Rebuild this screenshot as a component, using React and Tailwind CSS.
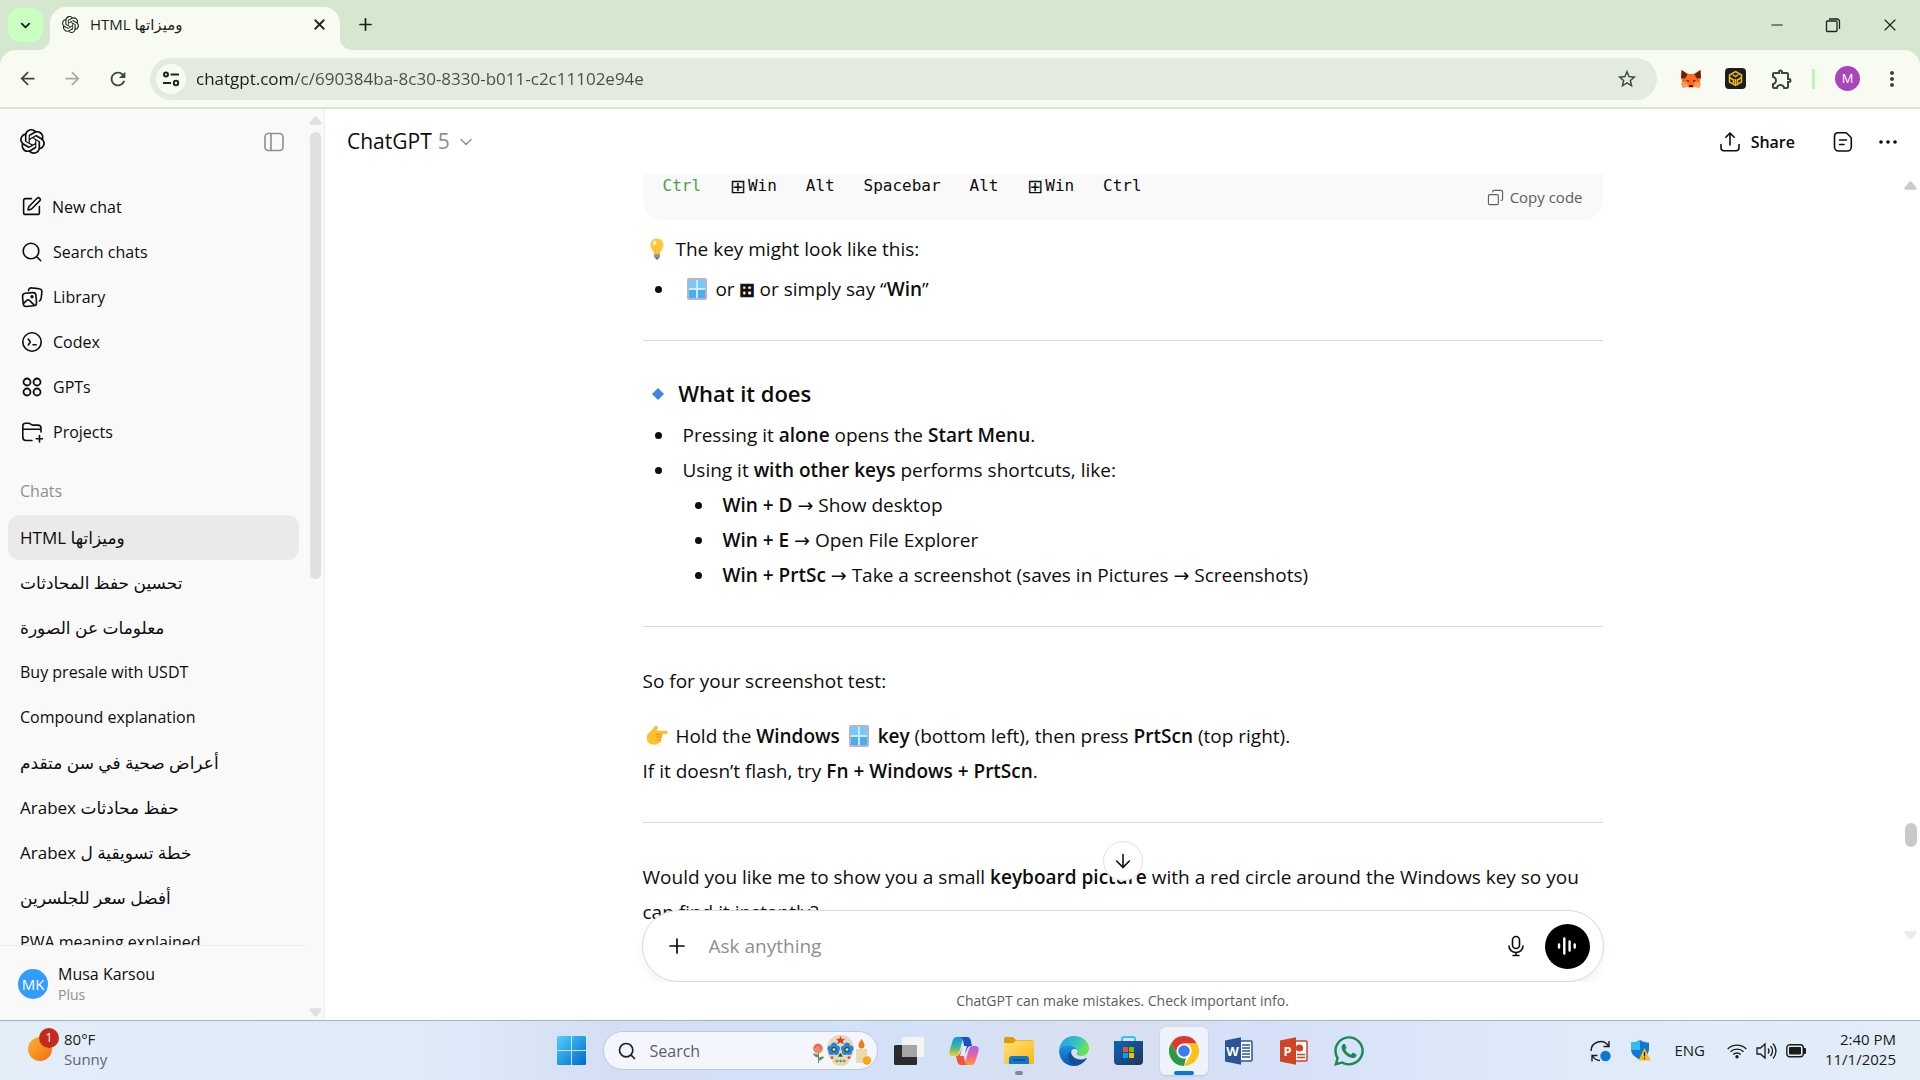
// Desktop view: browser window with a ChatGPT conversation, and the Windows taskbar below it.

import { ArrowDown, ChevronDown, Copy, Minus, Plus, Search, SquarePen, X } from 'lucide-react';
import { FaWhatsapp } from 'react-icons/fa';
import {
  MdArrowBack, MdArrowForward, MdMoreVert, MdOutlineExtension, MdRefresh, MdStarBorder,
} from 'react-icons/md';
import { SiOpenai } from 'react-icons/si';

const CHATS = [
  'HTML وميزاتها',
  'تحسين حفظ المحادثات',
  'معلومات عن الصورة',
  'Buy presale with USDT',
  'Compound explanation',
  'أعراض صحية في سن متقدم',
  'حفظ محادثات Arabex',
  'خطة تسويقية ل Arabex',
  'أفضل سعر للجلسرين',
  'PWA meaning explained',
];

// Arabic letters come out small next to Latin ones, so those titles get a larger size.
const ARABIC = /[\u0600-\u06ff]/;

const NAV = [
  { icon: NewChatIcon, label: 'New chat' },
  { icon: SearchIcon, label: 'Search chats' },
  { icon: LibraryIcon, label: 'Library' },
  { icon: CodexIcon, label: 'Codex' },
  { icon: GptsIcon, label: 'GPTs' },
  { icon: ProjectsIcon, label: 'Projects' },
];

// ─── Line icons ────────────────────────────────────────────────────────────
function Line({ size = 22, width = 1.6, children, className }) {
  return (
    <svg
      width={size}
      height={size}
      viewBox="0 0 22 22"
      fill="none"
      stroke="currentColor"
      strokeWidth={width}
      strokeLinecap="round"
      strokeLinejoin="round"
      className={className}
      aria-hidden="true"
    >
      {children}
    </svg>
  );
}

function NewChatIcon() {
  return <SquarePen size={21} strokeWidth={1.8} />;
}

function SearchIcon() {
  return <Line><circle cx="10" cy="10" r="7.8" /><path d="m15.7 15.7 4 4" /></Line>;
}

function LibraryIcon() {
  return (
    <Line>
      <rect x="1.8" y="7" width="13.4" height="13.2" rx="3" transform="rotate(-5 8 13)" />
      <path d="M7.5 4.6c.2-1.8 1.5-3 3.3-2.7l7.3.8c1.8.2 3 1.6 2.8 3.4l-.8 6.5c-.2 1-.6 1.9-1.6 2.3" />
      <path d="m2.6 17.4 3.2-3c.8-.8 1.8-.8 2.6 0l4.6 4.4" />
      <circle cx="11" cy="10.8" r=".9" fill="currentColor" />
    </Line>
  );
}

function CodexIcon() {
  return (
    <Line>
      <circle cx="11" cy="11" r="9.2" />
      <path d="m7.3 8 2 3-2 3M12 13.8h3.2" />
    </Line>
  );
}

function GptsIcon() {
  return (
    <Line width={1.8}>
      <circle cx="6" cy="6" r="3.5" />
      <circle cx="16" cy="6" r="3.5" />
      <circle cx="6" cy="16" r="3.5" />
      <circle cx="16" cy="16" r="3.5" />
    </Line>
  );
}

function ProjectsIcon() {
  return (
    <Line>
      <path d="M11 19.5H5a3.2 3.2 0 0 1-3.2-3.2V5A2.8 2.8 0 0 1 4.6 2.2h3c.9 0 1.5.4 2.1 1 .6.5 1.2.9 2.1.9h5A3.2 3.2 0 0 1 20 7.3V11M2 8.3h18M18.5 14.5v6.5M15.2 17.8h6.5" />
    </Line>
  );
}

function SidebarIcon() {
  return (
    <Line>
      <rect x="2" y="2.5" width="18" height="17" rx="3.5" />
      <path d="M8 2.5v17" />
    </Line>
  );
}

function ShareIcon() {
  return <Line><path d="M11 14V2.2M6.8 6.2 11 2l4.2 4.2M2 13.5v3.3a3 3 0 0 0 3 3h12a3 3 0 0 0 3-3v-3.3" /></Line>;
}

function DocIcon() {
  return (
    <Line>
      <path d="M6 1.8h7.3c.8 0 1.5.3 2 .9l3.1 3.1c.6.5.9 1.2.9 2V16a4 4 0 0 1-4 4H6.5a4 4 0 0 1-4-4V5.5A3.7 3.7 0 0 1 6 1.8ZM7.5 9h7M7.5 13.5h4.5" />
    </Line>
  );
}

function DotsIcon() {
  return (
    <svg width="20" height="20" viewBox="0 0 20 20" fill="currentColor" aria-hidden="true">
      <circle cx="3" cy="10" r="1.8" /><circle cx="10" cy="10" r="1.8" /><circle cx="17" cy="10" r="1.8" />
    </svg>
  );
}

function MicIcon() {
  return (
    <Line>
      <rect x="7.5" y="1.5" width="7" height="12" rx="3.5" />
      <path d="M4 11a7 6.5 0 0 0 14 0M11 17.5v3M8 20.5h6" />
    </Line>
  );
}

function TuneIcon() {
  return (
    <svg width="18" height="18" viewBox="0 0 18 18" fill="none" stroke="#1d2a1b" strokeWidth="2" aria-hidden="true">
      <circle cx="4" cy="4.5" r="2" /><path d="M8.5 4.5H17M1 13h8" /><circle cx="14" cy="13" r="2.2" />
    </svg>
  );
}

function Triangle({ className }) {
  return (
    <svg width="13" height="9" viewBox="0 0 13 9" fill="currentColor" className={className} aria-hidden="true">
      <path d="M5.3 1a1.5 1.5 0 0 1 2.4 0l4.6 5.6c.7 1 .2 2.2-1 2.2H1.7C.5 8.8 0 7.6.7 6.6Z" />
    </svg>
  );
}

// ─── Browser chrome ────────────────────────────────────────────────────────
function TabStrip() {
  return (
    <div className="h-[50px] shrink-0 flex items-start bg-[#d5e7ce] text-[#1c241a]">
      <button type="button" aria-label="Search tabs" className="ml-2 mt-2 w-[35px] h-[34px] rounded-xl bg-[#c9ffc0] grid place-items-center">
        <ChevronDown size={15} strokeWidth={3} />
      </button>
      <div className="relative ml-[7px] mt-[7px] w-[290px] h-[43px] rounded-t-2xl bg-[#f8fbf1] flex items-center px-3">
        <span className="absolute -left-3 bottom-0 size-3 bg-[radial-gradient(circle_at_0_0,transparent_12px,#f8fbf1_12px)]" />
        <span className="absolute -right-3 bottom-0 size-3 bg-[radial-gradient(circle_at_100%_0,transparent_12px,#f8fbf1_12px)]" />
        <SiOpenai size={17} className="-mt-2" />
        <span className="-mt-2 ml-[11px] flex-1 text-[15px]">HTML وميزاتها</span>
        <button type="button" aria-label="Close tab" className="-mt-2"><X size={17} strokeWidth={2.5} /></button>
      </div>
      <button type="button" aria-label="New tab" className="ml-4 mt-[15px]"><Plus size={19} strokeWidth={2.2} /></button>
      <div className="ml-auto mt-[15px] mr-5 flex items-center gap-[38px]">
        <button type="button" aria-label="Minimize"><Minus size={18} strokeWidth={1.4} /></button>
        <button type="button" aria-label="Restore">
          <svg width="18" height="18" viewBox="0 0 18 18" fill="none" stroke="currentColor" strokeWidth="1.3">
            <rect x="2.5" y="5" width="10.5" height="10.5" rx="1" />
            <path d="M5 3h8a2.5 2.5 0 0 1 2.5 2.5V13" />
          </svg>
        </button>
        <button type="button" aria-label="Close"><X size={20} strokeWidth={1.4} /></button>
      </div>
    </div>
  );
}

function MetaMaskIcon() {
  return (
    <svg width="20" height="18" viewBox="0 0 20 18" aria-hidden="true">
      <path d="m.6 0 7 4h4.8l7-4L20 8l-1.2 3 .8 3.5-1.5 3.3-4.2-1-2 .8H8.1l-2-.8-4.2 1L.4 14.5 1.2 11 0 8Z" fill="#ff6a1c" />
      <path d="m.6 0 6 4.5L4 8.5 0 8Zm18.8 0-6 4.5 2.6 4 4-.5Z" fill="#6b1f10" />
      <path d="M1.2 12h4.5l1.6 4.8-5.2 1L.4 14.5Zm17.6 0h-4.5l-1.6 4.8 5.2 1 1.7-3.3Z" fill="#ff9a5b" />
      <path d="m5 10 3 .5-.5 1.6Zm10 0-3 .5.5 1.6ZM8.5 15h3l.5 2H8Z" fill="#2c1a15" />
    </svg>
  );
}

function BinanceIcon() {
  return (
    <svg width="21" height="21" viewBox="0 0 21 21" aria-hidden="true">
      <rect width="21" height="21" rx="4" fill="#1c1d24" />
      <g fill="none" stroke="#f2bb13" strokeWidth="1.5">
        <path d="M10.5 3.5 16.5 7v7l-6 3.500-6-3.500V7Z" />
        <path d="M4.5 9.5 8.5 12v3.500M16.500 9.500 12.500 12v3.500M7.500 6.500l3 2 3-2M10.500 11v6" />
      </g>
    </svg>
  );
}

function Toolbar() {
  return (
    <div className="bg-[#d5e7ce] shrink-0">
      <div className="h-[59px] rounded-t-2xl bg-[#f8fbf1] border-b-2 border-[#dbe5d6] flex items-center text-[#3a4a37]">
        <button type="button" aria-label="Back" className="ml-[17px]"><MdArrowBack size={21} /></button>
        <button type="button" aria-label="Forward" className="ml-6 text-[#a5aca1]"><MdArrowForward size={21} /></button>
        <button type="button" aria-label="Reload" className="ml-6"><MdRefresh size={22} /></button>
        <div className="ml-[21px] h-[42px] flex-1 rounded-full bg-[#e3ebdf] flex items-center pl-1.5 pr-[19px]">
          <button type="button" aria-label="Site information" className="w-[30px] h-[30px] rounded-full bg-[#f8fbf1] grid place-items-center">
            <TuneIcon />
          </button>
          <input
            aria-label="Address"
            defaultValue="chatgpt.com/c/690384ba-8c30-8330-b011-c2c11102e94e"
            className="ml-2.5 flex-1 text-[17px] outline-none bg-clip-text text-transparent bg-[linear-gradient(90deg,#1a1c19_97px,#454d43_97px)]"
          />
          <button type="button" aria-label="Bookmark"><MdStarBorder size={22} /></button>
        </div>
        <div className="ml-6 mr-4 flex items-center">
          <MetaMaskIcon />
          <span className="ml-6"><BinanceIcon /></span>
          <MdOutlineExtension size={24} className="ml-6" />
          <span className="ml-[18px] w-[3px] h-5 bg-[#bdf3b5]" />
          <span className="ml-5 size-[25px] rounded-full bg-[#a845bb] text-white text-[13px] grid place-items-center">M</span>
          <button type="button" aria-label="Menu" className="ml-5"><MdMoreVert size={24} /></button>
        </div>
      </div>
    </div>
  );
}

// ─── Sidebar ───────────────────────────────────────────────────────────────
function Sidebar() {
  return (
    <aside className="w-[325px] shrink-0 border-r border-[#ededed] bg-[#f9f9f9] flex">
      <div className="flex-1 min-w-0 flex flex-col">
        <div className="h-[65px] shrink-0 flex items-center justify-between pl-5 pr-6">
          <SiOpenai size={25} />
          <button type="button" aria-label="Close sidebar" className="text-[#8f8f8f]"><SidebarIcon /></button>
        </div>

        <nav className="mt-2.5 shrink-0">
          {NAV.map(({ icon: Icon, label }) => (
            <a key={label} href="#" className="h-[45px] pl-[21px] flex items-center gap-2.5">
              <Icon />
              {label}
            </a>
          ))}
        </nav>

        <h2 className="mt-[17px] mb-1 h-10 shrink-0 pl-5 leading-10 text-[#8f8f8f]">Chats</h2>
        <div className="flex-1 min-h-0 overflow-hidden">
          {CHATS.map((title, i) => (
            <a
              key={title}
              href="#"
              dir="auto"
              className={`block h-[45px] ml-2 mr-[10px] px-3 text-left leading-[45px] rounded-xl whitespace-nowrap ${ARABIC.test(title) ? 'text-[17px]' : 'text-base'} ${i === 0 ? 'bg-[#eaeaea]' : ''}`}
            >
              {title}
            </a>
          ))}
        </div>

        <div className="h-[75px] shrink-0 mr-[3px] border-t border-[#ebebeb] flex items-start">
          <span className="ml-[18px] mt-[23px] size-[30px] rounded-full bg-[#339cff] text-white text-[15px] grid place-items-center">MK</span>
          <div className="ml-2.5 mt-4">
            <p className="leading-6">Musa Karsou</p>
            <p className="text-sm leading-[18px] text-[#8f8f8f]">Plus</p>
          </div>
        </div>
      </div>
      <div className="w-[15px] shrink-0 flex flex-col items-start py-[7px] text-[#e0e0e0]">
        <Triangle />
        <span className="mt-[7px] ml-px w-[11px] h-[447px] rounded-full bg-[#e0e0e0]" />
        <Triangle className="mt-auto rotate-180 -mb-1" />
      </div>
    </aside>
  );
}

// ─── Emoji drawings that sit in the text ───────────────────────────────────
function Emoji({ children, wide }) {
  return (
    <span className={`inline-flex justify-center align-middle -mt-1 ${wide ? 'w-[30px]' : 'w-7'}`}>{children}</span>
  );
}

function WindowEmoji() {
  return (
    <Emoji>
      <svg width="20" height="22" viewBox="0 0 20 22" aria-hidden="true">
        <rect width="20" height="22" rx="2" fill="#b9b3d3" />
        <rect x="2" y="2" width="16" height="18" fill="#c9ecff" />
        <rect x="2" y="2" width="7" height="8" fill="#74cbfb" />
        <rect x="11" y="2" width="7" height="8" fill="#74cbfb" />
        <rect x="2" y="12" width="7" height="8" fill="#4bacf3" />
        <rect x="11" y="12" width="7" height="8" fill="#4bacf3" />
      </svg>
    </Emoji>
  );
}

function BulbEmoji() {
  return (
    <Emoji>
      <svg width="16" height="22" viewBox="0 0 16 22" aria-hidden="true">
        <path d="M8 .5c4 0 6.500 2.900 6.500 6.500 0 4-3 5.500-3.500 9H5C4.500 12.500 1.500 11 1.500 7 1.500 3.400 4 .5 8 .5Z" fill="#fdc83c" />
        <ellipse cx="5.5" cy="5" rx="1.8" ry="2.6" fill="#fff0a3" />
        <path d="M6.500 15V9.500L8 8l1.500 1.500V15" fill="none" stroke="#f7ae3a" strokeWidth=".8" />
        <rect x="5" y="16" width="6" height="4" rx="1" fill="#a78aae" />
        <rect x="6.5" y="19.5" width="3" height="2" rx="1" fill="#6f5a7a" />
      </svg>
    </Emoji>
  );
}

function HandEmoji() {
  return (
    <Emoji>
      <svg width="22" height="21" viewBox="0 0 22 21" aria-hidden="true">
        <path d="M10.5.8c1.5.4 1.8 2 1 3.3l-1 1.6h9.300c2.500 0 2.500 3.400 0 3.400H16c1 1 .8 2.500-.4 3 .8 1.200.4 2.500-.8 2.900.5 1.300-.1 2.500-1.500 2.800-1.500 1.700-4.300 2.200-7 1.700C2.800 18.900.8 16.500.8 13c0-3.800 2-5 4.300-6.900C7 4.500 8.200.3 10.500.8Z" fill="#ffc02e" />
        <path d="M10 9.300h6M10.500 12.200h5M10.500 15.100h4" stroke="#ee8a24" fill="none" />
      </svg>
    </Emoji>
  );
}

// ─── Conversation ──────────────────────────────────────────────────────────
function WinKey() {
  return <><span className="inline-block w-[18px] align-bottom text-[19px] leading-[22px] font-['DejaVu_Sans']">⊞</span>Win</>;
}

function Thread() {
  const rule = 'mt-[33px] mb-[37px] border-[#d9d9d9]';
  return (
    <article className="w-full max-w-[960px] mx-auto text-[19px] leading-[35px]">
      <div className="h-[46px] rounded-b-[20px] bg-[#f9f9f9] flex justify-between pl-5 pr-5">
        <pre className="pt-px font-['DejaVu_Sans_Mono',monospace] text-base leading-[22px]">
          <span className="text-[#4b9f4b]">Ctrl</span>{'   '}<WinKey />{'   Alt   Spacebar   Alt   '}<WinKey />{'   Ctrl'}
        </pre>
        <button type="button" className="flex items-center gap-1.5 text-[15px] text-[#5d5d5d]">
          <Copy size={17} strokeWidth={1.6} className="-scale-x-100" />
          Copy code
        </button>
      </div>

      <p className="mt-3"><BulbEmoji /> The key might look like this:</p>
      <ul className="mt-[5px] pl-8 list-disc">
        <li className="pl-2">
          <WindowEmoji /> or <strong className="font-bold text-lg leading-none font-['DejaVu_Sans'] [-webkit-text-stroke:1px]">⊞</strong> or simply say “<B>Win</B>”
        </li>
      </ul>

      <hr className={rule} />

      <h3 className="text-[22px] leading-[30px] font-semibold">
        <Emoji wide>
          <svg width="12" height="12" viewBox="0 0 12 12" aria-hidden="true"><path d="m6 0 6 6-6 6-6-6Z" fill="#3d87e0" /></svg>
        </Emoji>{' '}
        What it does
      </h3>
      <ul className="mt-2.5 pl-8 list-disc">
        <li className="pl-2">Pressing it <B>alone</B> opens the <B>Start Menu</B>.</li>
        <li className="pl-2">
          Using it <B>with other keys</B> performs shortcuts, like:
          <ul className="pl-8 list-disc">
            <li className="pl-2"><B>Win + D</B> → Show desktop</li>
            <li className="pl-2"><B>Win + E</B> → Open File Explorer</li>
            <li className="pl-2"><B>Win + PrtSc</B> → Take a screenshot (saves in Pictures → Screenshots)</li>
          </ul>
        </li>
      </ul>

      <hr className={rule} />

      <p>So for your screenshot test:</p>
      <p className="mt-5">
        <HandEmoji /> Hold the <B>Windows <WindowEmoji /> key</B> (bottom left), then press <B>PrtScn</B> (top right).
        <br />
        If it doesn’t flash, try <B>Fn + Windows + PrtScn</B>.
      </p>

      <hr className={rule} />

      <p>
        Would you like me to show you a small <B>keyboard picture</B> with a red circle around the Windows key so you
        can find it instantly?
      </p>
    </article>
  );
}

function B({ children }) {
  return <strong className="font-semibold">{children}</strong>;
}

function Composer() {
  return (
    <div className="absolute inset-x-0 bottom-0 flex flex-col items-center">
      <button type="button" aria-label="Scroll to bottom" className="size-10 mb-[29px] rounded-full border border-[#e3e3e3] bg-white grid place-items-center">
        <ArrowDown size={22} strokeWidth={1.7} />
      </button>
      <form className="w-full max-w-[962px] h-[72px] rounded-full border border-[#d9d9d9] bg-white shadow-[0_5px_10px_rgba(0,0,0,0.05)] flex items-center pl-[22px] pr-[13px]">
        <button type="button" aria-label="Add files"><Plus size={24} strokeWidth={1.7} /></button>
        <input aria-label="Message" placeholder="Ask anything" className="ml-5 flex-1 text-[19px] outline-none placeholder:text-[#8f8f8f]" />
        <button type="button" aria-label="Dictate"><MicIcon /></button>
        <button type="button" aria-label="Voice mode" className="ml-[18px] size-[45px] rounded-full bg-black text-white grid place-items-center">
          <svg width="20" height="20" viewBox="0 0 20 20" stroke="currentColor" strokeWidth="2.4" strokeLinecap="round">
            <path d="M2 8.500v3M7.300 2.500v15M12.600 5.500v9M17.700 8.500v3" />
          </svg>
        </button>
      </form>
      <p className="h-[38px] w-full bg-white text-center text-sm leading-[38px] text-[#5d5d5d]">
        ChatGPT can make mistakes. Check important info.
      </p>
    </div>
  );
}

function Main() {
  return (
    <main className="relative flex-1 min-w-0 flex flex-col bg-white">
      <header className="h-[65px] shrink-0 flex items-center pl-[22px] pr-[22px]">
        <button type="button" className="flex items-center gap-1.5 text-[21px]">
          ChatGPT <span className="text-[#8f8f8f]">5</span>
          <ChevronDown size={20} strokeWidth={1.7} className="text-[#8f8f8f]" />
        </button>
        <button type="button" className="ml-auto flex items-center gap-2.5 text-base font-semibold"><ShareIcon /> Share</button>
        <button type="button" aria-label="Notes" className="ml-[37px]"><DocIcon /></button>
        <button type="button" aria-label="More" className="ml-6"><DotsIcon /></button>
      </header>
      <div className="flex-1 min-h-0 overflow-hidden">
        <Thread />
      </div>
      <Composer />
      {/* conversation scrollbar */}
      <div className="absolute right-[3px] top-[72px] bottom-20 flex flex-col items-center text-[#c9c9c9]">
        <Triangle />
        <span className="mt-[633px] w-3 h-6 rounded-full bg-[#c9c9c9]" />
        <Triangle className="mt-auto rotate-180 text-[#ebebeb]" />
      </div>
    </main>
  );
}

// ─── Taskbar ───────────────────────────────────────────────────────────────
function StartLogo() {
  return (
    <svg width="29" height="29" viewBox="0 0 29 29">
      <defs>
        <linearGradient id="start" x1="0" y1="0" x2="1" y2="1"><stop stopColor="#4fd0ff" /><stop offset="1" stopColor="#0068cc" /></linearGradient>
      </defs>
      <path d="M1.500 0H14v14H0V1.500A1.500 1.500 0 0 1 1.500 0ZM15 0h12.500A1.500 1.500 0 0 1 29 1.500V14H15ZM0 15h14v14H1.500A1.500 1.500 0 0 1 0 27.500ZM15 15h14v12.500a1.500 1.500 0 0 1-1.500 1.500H15Z" fill="url(#start)" />
    </svg>
  );
}

function TaskViewLogo() {
  return (
    <svg width="30" height="28" viewBox="0 0 30 28">
      <rect y="8" width="23" height="20" rx="1.5" fill="#2b2b2b" />
      <rect x="8" width="22" height="20" rx="1.5" fill="#f4f4f4" />
      <path d="M8 8h15v12H8Z" fill="#a5a5a5" />
    </svg>
  );
}

function CopilotLogo() {
  return (
    <svg width="30" height="28" viewBox="0 0 30 28">
      <defs>
        <linearGradient id="cpA" x1="0" y1="0" x2="0" y2="1"><stop stopColor="#1b8ff0" /><stop offset=".5" stopColor="#35b7a0" /><stop offset="1" stopColor="#f6d21c" /></linearGradient>
        <linearGradient id="cpB" x1="0" y1="0" x2="0" y2="1"><stop stopColor="#a564f0" /><stop offset=".5" stopColor="#f2609c" /><stop offset="1" stopColor="#ff9a3c" /></linearGradient>
      </defs>
      <path d="M8 0h9c-3 1-4 5-5 9l-2 7c-.6 2-2 3-4 3H3.500C0 19 0 16 .8 13L3.500 4C4.300 1.500 5.500 0 8 0Z" fill="url(#cpA)" />
      <path d="M22 28h-9c3-1 4-5 5-9l2-7c.6-2 2-3 4-3h2.500c3.500 0 3.500 3 2.700 6l-2.700 9c-.8 2.500-2 4-4.500 4Z" fill="url(#cpB)" />
      <path d="M11 0h7c2 0 3 1 3.600 3L23 9h-1c-2.500 0-3.500 1.500-4 3l-1.500 4L14 3c-.5-2-1.500-3-3-3Z" fill="#1c4fc4" />
      <path d="M19 28h-7c-2 0-3-1-3.600-3L7 19c2.500 0 3.500-1.500 4-3l2-5 3 14c.5 2 1.500 3 3 3Z" fill="#f2553c" />
      <path d="M13.500 9H18l-3 10h-4Z" fill="#e3ebfa" />
    </svg>
  );
}

function ExplorerLogo() {
  return (
    <svg width="30" height="27" viewBox="0 0 30 27">
      <defs>
        <linearGradient id="folder" x1="0" y1="0" x2="1" y2="1"><stop stopColor="#ffe07a" /><stop offset="1" stopColor="#fbb912" /></linearGradient>
      </defs>
      <path d="M0 2a2 2 0 0 1 2-2h7l3 3h16a2 2 0 0 1 2 2v4H0Z" fill="#dc9a05" />
      <path d="M0 6h9l3-2.500h18V27H0Z" fill="url(#folder)" />
      <path d="M5 27v-5a3 3 0 0 1 3-3h14a3 3 0 0 1 3 3v5Z" fill="#1278c9" />
      <path d="M9 23h12" stroke="#0c4c86" strokeWidth="1.5" />
    </svg>
  );
}

function EdgeLogo() {
  return (
    <svg width="30" height="30" viewBox="0 0 30 30">
      <defs>
        <linearGradient id="edgeTop" x1="0" y1="0" x2="1" y2=".4"><stop stopColor="#1b9de2" /><stop offset=".6" stopColor="#35c3c4" /><stop offset="1" stopColor="#6be34f" /></linearGradient>
        <linearGradient id="edgeLow" x1="0" y1="0" x2="0" y2="1"><stop stopColor="#1a96e6" /><stop offset="1" stopColor="#0a54b0" /></linearGradient>
      </defs>
      <path d="M.2 14C.8 6 7 0 15 0c9 0 15 6 15 12.500 0 4.500-3.500 7.500-7.500 7.500-3 0-5-1-5-2 0-.8 1-1.200 1-3 0-2.800-3-5-7.500-5C5.500 10 1 12 .2 14Z" fill="url(#edgeTop)" />
      <path d="M.1 14.500C1 11 5 9.500 9.500 9.500c4.500 0 8 2.200 8.800 4.500-1-1-3-1.500-4.300-.7-3 2-3.500 5-2.500 8 1.200 4 4.500 7 8.500 7.700-1.500.7-3.500 1-5 1C6.500 30 0 23.500.1 14.500Z" fill="url(#edgeLow)" />
      <path d="M12.500 14.500c-3 2.500-4 6-2.500 9.500 1.800 4 6 5.800 10 5 3-1 6-3.500 7.600-6.200.4-.6-.1-.9-.6-.6-4.500 2.300-11 1.400-13.700-2.700-1.200-1.800-1.400-3.500-.8-5Z" fill="#14509a" />
    </svg>
  );
}

function StoreLogo() {
  return (
    <svg width="29" height="29" viewBox="0 0 29 29">
      <defs>
        <linearGradient id="store" x1="0" y1="0" x2="1" y2="1"><stop stopColor="#0b67bd" /><stop offset="1" stopColor="#223357" /></linearGradient>
      </defs>
      <path d="M8 8V3a2 2 0 0 1 2-2h9a2 2 0 0 1 2 2v5" fill="none" stroke="#2fc2f5" strokeWidth="2" />
      <path d="M0 5h29v20a4 4 0 0 1-4 4H4a4 4 0 0 1-4-4Z" fill="url(#store)" />
      <path d="M9 11h5v5H9Z" fill="#f25022" />
      <path d="M15 11h5v5h-5Z" fill="#7fba00" />
      <path d="M9 17h5v5H9Z" fill="#00a4ef" />
      <path d="M15 17h5v5h-5Z" fill="#ffb900" />
    </svg>
  );
}

function ChromeLogo() {
  return (
    <svg width="30" height="30" viewBox="0 0 30 30">
      <circle cx="15" cy="15" r="15" fill="#fff" />
      <path d="M2 7.500A15 15 0 0 1 28 7.500H15a7.500 7.500 0 0 0-6.500 11.200Z" fill="#dc3a30" />
      <path d="M2 7.500 8.500 18.700A7.500 7.500 0 0 0 15 22.500l2-.3L15 30A15 15 0 0 1 2 7.500Z" fill="#2b9a48" />
      <path d="M28 7.500A15 15 0 0 1 15 30l6.500-11.200A7.500 7.500 0 0 0 15 7.500Z" fill="#fbc117" />
      <circle cx="15" cy="15" r="7.3" fill="#fff" />
      <circle cx="15" cy="15" r="5.8" fill="#3b7ded" />
    </svg>
  );
}

function OfficeLogo({ letter, color, children }) {
  return (
    <span className="relative flex">
      <svg width="28" height="28" viewBox="0 0 28 28">
        <rect x="14" y="4" width="13" height="20" rx="1" fill="#fff" stroke={color} strokeWidth="1.5" />
        {children}
        <path d="M0 3.500 16 .3v27.400L0 24.500Z" fill={color} />
      </svg>
      <span className="absolute inset-y-0 left-0 w-4 text-center text-[13px] leading-7 font-bold text-white">{letter}</span>
    </span>
  );
}

function SkullArt() {
  return (
    <svg width="60" height="32" viewBox="0 0 60 32" aria-hidden="true">
      <path d="M6.500 16v12M6.500 22c-2 0-4-1-5-3 3 0 5 1 5 3Zm0 3c2 0 4-1 5-3-3 0-5 1-5 3Z" fill="#5f8f57" stroke="#5f8f57" />
      <circle cx="6" cy="13.5" r="5" fill="#ef8b6b" />
      <path d="M3.500 13a2.500 2.500 0 1 1 4 1.500" fill="none" stroke="#c95438" />
      <path d="M28.500 0C37 0 42 6 42 14c0 6-2 8-4.500 9.500C37 29 34 31 28.500 31S20 29 19.500 23.500C17 22 15 20 15 14 15 6 20 0 28.500 0Z" fill="#ead9b5" />
      <g fill="#2585dc">
        <circle cx="22" cy="10.5" r="3" /><circle cx="25" cy="13.5" r="3" /><circle cx="24" cy="17" r="3" /><circle cx="19.5" cy="17" r="3" /><circle cx="18.5" cy="13.5" r="3" />
        <circle cx="35" cy="10.5" r="3" /><circle cx="38.5" cy="13.5" r="3" /><circle cx="37" cy="17" r="3" /><circle cx="33" cy="17" r="3" /><circle cx="32" cy="13.5" r="3" />
      </g>
      <circle cx="22" cy="14.5" r="2.6" fill="#174a7c" /><circle cx="35" cy="14.5" r="2.6" fill="#174a7c" />
      <circle cx="22" cy="14.5" r="1.5" fill="#f6cf40" /><circle cx="35" cy="14.5" r="1.5" fill="#f6cf40" />
      <path d="m28.500 1 1.300 3 3.200-.2-2.300 2.400 1.300 3-3.500-1.700L25 9.200l1.300-3L24 3.800l3.200.2Z" fill="#e23b2c" />
      <path d="m28.500 18 2 3.500h-4ZM23 26h11M25 24.500v3M28.500 24.500v3M32 24.500v3" fill="#2b3a33" stroke="#5a7a55" strokeWidth=".8" />
      <circle cx="20" cy="22.5" r="1.5" fill="#e2543f" /><circle cx="37" cy="22.5" r="1.5" fill="#e2543f" />
      <path d="M44 14h11v14H44Z" fill="#ecd9ae" />
      <path d="M49.500 4c2 3 3 4.500 3 6.500a3 3 0 0 1-6 0c0-2 1-3.500 3-6.500Z" fill="#f47a16" />
      <circle cx="55" cy="25.5" r="4.2" fill="#f9a60f" />
    </svg>
  );
}

function AppButton({ label, active, running, children }) {
  return (
    <button
      type="button"
      aria-label={label}
      className={`relative size-12 rounded-md grid place-items-center ${active ? 'bg-white/60 shadow-sm' : ''}`}
    >
      {children}
      {active && <span className="absolute bottom-0 w-5 h-1 rounded-full bg-[#0a78d4]" />}
      {running && <span className="absolute bottom-0 w-2 h-1 rounded-full bg-[#838793]" />}
    </button>
  );
}

function Tray() {
  return (
    <div className="flex items-center justify-end pr-6 text-[#1b1b1b]">
      <svg width="21" height="22" viewBox="0 0 21 22" fill="none" stroke="currentColor" strokeWidth="1.4" aria-hidden="true">
        <path d="M1 11a9.500 9.500 0 0 1 17.500-5M19 1v5.500h-5.500M10 20.500A9.500 9.500 0 0 1 2.500 16M2 21.500V15.500h5.500" />
        <circle cx="15.5" cy="16" r="5.2" fill="#0a78d4" stroke="none" />
      </svg>
      <svg width="20" height="21" viewBox="0 0 20 21" className="ml-5" aria-hidden="true">
        <path d="M9 0c3 2 6 2.500 9 2.500V9c0 5-4 8.500-9 10.500C4 17.500 0 14 0 9V2.500C3 2.500 6 2 9 0Z" fill="#1277d0" />
        <path d="M9 0v10H0V2.500C3 2.500 6 2 9 0Z" fill="#36b9ef" />
        <path d="m13.500 8 6.200 12.500H7.500Z" fill="#fbbc18" />
        <path d="M13.500 12v4.500M13.500 17.800v1.400" stroke="#222" strokeWidth="1.3" />
      </svg>
      <span className="ml-[23px] text-[15px]">ENG</span>
      <svg width="20" height="16" viewBox="0 0 20 16" fill="none" stroke="currentColor" strokeWidth="1.4" className="ml-[22px]" aria-hidden="true">
        <path d="M.7 6a13 13 0 0 1 18.600 0M3.500 8.800a9.200 9.200 0 0 1 13 0M6.300 11.500a5.300 5.300 0 0 1 7.400 0" />
        <circle cx="10" cy="13.7" r="1.7" fill="currentColor" stroke="none" />
      </svg>
      <svg width="21" height="18" viewBox="0 0 21 18" fill="none" stroke="currentColor" strokeWidth="1.3" className="ml-[9px]" aria-hidden="true">
        <path d="M1 6v6h3.500L9 16V2L4.500 6ZM12 6.500c1.300 1.500 1.300 3.500 0 5M14.500 4c2.700 2.800 2.700 7.200 0 10M17 1.500c4 4.500 4 10.500 0 15" />
      </svg>
      <svg width="21" height="14" viewBox="0 0 21 14" className="ml-[9px]" aria-hidden="true">
        <rect x=".8" y=".8" width="16.5" height="12" rx="3" fill="none" stroke="currentColor" strokeWidth="1.4" />
        <rect x="3" y="3" width="12" height="7.6" rx="1" fill="currentColor" />
        <path d="M18 4.500h1.500v5H18" fill="currentColor" stroke="currentColor" />
      </svg>
      <div className="ml-[18px] mb-1 text-right text-[15px] leading-5">
        <p>2:40 PM</p>
        <p>11/1/2025</p>
      </div>
    </div>
  );
}

function Taskbar() {
  return (
    <footer className="h-[60px] shrink-0 border-t border-[#a9b1c0] bg-[linear-gradient(90deg,#e2edf8_0%,#dfebf9_22%,#d5def4_32%,#d2e2f9_44%,#d9dff0_58%,#d5e0f8_66%,#dfebf9_82%,#e2edf8_100%)] grid grid-cols-[1fr_auto_1fr] items-center">
      <div className="flex items-center pl-7">
        <div className="relative mb-3 w-[31px] h-[33px]">
          <span className="absolute left-0 bottom-0 size-6 rounded-full bg-linear-to-br from-[#f4b732] to-[#f26a0c]" />
          <span className="absolute right-0 top-0 size-5 rounded-full bg-[#c42b1c] text-white text-xs leading-5 text-center">1</span>
        </div>
        <div className="ml-[5px] mb-1 text-[15px] leading-5">
          <p className="text-[#1b1b1b]">80°F</p>
          <p className="text-[#5c6670]">Sunny</p>
        </div>
      </div>

      <div className="flex items-center gap-[7px]">
        <AppButton label="Start"><StartLogo /></AppButton>
        <label className="w-[275px] h-[39px] rounded-full border border-[#bcc8e2] bg-[#f3f6fd] flex items-center pl-[13px] pr-[5px]">
          <Search size={20} strokeWidth={2} className="shrink-0 text-[#222]" />
          <input aria-label="Search" placeholder="Search" className="ml-[13px] flex-1 min-w-0 text-base outline-none placeholder:text-[#5b5f66]" />
          <SkullArt />
        </label>
        <AppButton label="Task view"><TaskViewLogo /></AppButton>
        <AppButton label="Copilot"><CopilotLogo /></AppButton>
        <AppButton label="File Explorer" running><ExplorerLogo /></AppButton>
        <AppButton label="Edge"><EdgeLogo /></AppButton>
        <AppButton label="Microsoft Store"><StoreLogo /></AppButton>
        <AppButton label="Chrome" active><ChromeLogo /></AppButton>
        <AppButton label="Word">
          <OfficeLogo letter="W" color="#2a5699">
            <path d="M17 8h8M17 11h8M17 14h8M17 17h8M17 20h8" stroke="#2a5699" strokeWidth="1.3" />
          </OfficeLogo>
        </AppButton>
        <AppButton label="PowerPoint">
          <OfficeLogo letter="P" color="#d04423">
            <circle cx="19.5" cy="11" r="3.6" fill="#d04423" />
            <path d="M17 17.500h8M17 20.500h8" stroke="#d04423" strokeWidth="1.5" />
          </OfficeLogo>
        </AppButton>
        <AppButton label="WhatsApp"><FaWhatsapp size={34} className="text-[#1a8a54]" /></AppButton>
      </div>

      <Tray />
    </footer>
  );
}

export default function App() {
  return (
    <div className="h-screen flex flex-col overflow-hidden font-['Open_Sans','DejaVu_Sans',sans-serif] text-base text-[#0d0d0d]">
      <TabStrip />
      <Toolbar />
      <div className="flex-1 min-h-0 flex">
        <Sidebar />
        <Main />
      </div>
      <Taskbar />
    </div>
  );
}
